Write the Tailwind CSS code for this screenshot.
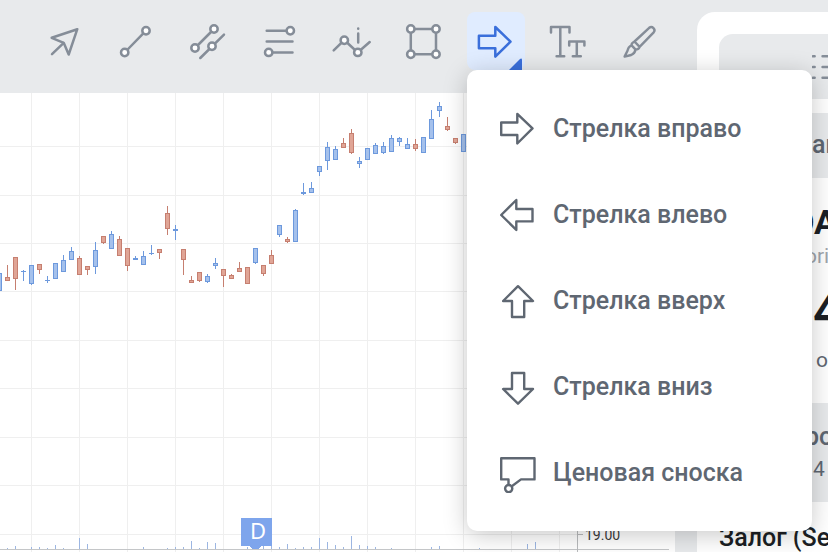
<!DOCTYPE html>
<html lang="ru">
<head>
<meta charset="utf-8">
<meta name="viewport" content="width=device-width, initial-scale=1">
<title>График</title>
<script src="https://cdn.jsdelivr.net/npm/@tailwindcss/browser@4"></script>
</head>
<body class="flex h-screen overflow-hidden bg-[#e8eaec] font-[Roboto,sans-serif] text-[#5f6772]">
<main class="flex min-w-0 flex-1 flex-col">
  <header class="z-10 flex h-[93px] shrink-0 gap-3.5 pt-3 pl-[35px] text-[#858d98]">
    <button type="button" aria-label="Курсор" class="size-[58px] shrink-0">
      <svg viewBox="0 0 58 58" class="size-full" fill="none" stroke="currentColor" stroke-width="2.5" stroke-linecap="round" stroke-linejoin="round"><path d="M42.3 17.2 16.7 25.8 28.7 30.8 33.7 42.5ZM28.7 30.8 17 42.2"/></svg>
    </button>
    <button type="button" aria-label="Линия" class="size-[58px] shrink-0">
      <svg viewBox="0 0 58 58" class="size-full" fill="none" stroke="currentColor" stroke-width="2.5" stroke-linecap="round"><path d="M17.7 40.5 39 18.7"/><g fill="#fff"><circle cx="17.7" cy="40.5" r="3.7"/><circle cx="39" cy="18.7" r="3.7"/></g></svg>
    </button>
    <button type="button" aria-label="Канал" class="size-[58px] shrink-0">
      <svg viewBox="0 0 58 58" class="size-full" fill="none" stroke="currentColor" stroke-width="2.5" stroke-linecap="round"><path d="M16 36 35 17M45 22.7 21.3 46"/><g fill="#fff"><circle cx="16" cy="36" r="3.7"/><circle cx="35" cy="17" r="3.7"/><circle cx="33" cy="34.3" r="3.7"/></g></svg>
    </button>
    <button type="button" aria-label="Уровни" class="size-[58px] shrink-0">
      <svg viewBox="0 0 58 58" class="size-full" fill="none" stroke="currentColor" stroke-width="2.5" stroke-linecap="round"><path d="M15.7 18.8H39M15.7 29.6H41.5M17.7 40.4H41.5"/><g fill="#fff"><circle cx="39.3" cy="18.8" r="3.7"/><circle cx="17.7" cy="40.4" r="3.7"/></g></svg>
    </button>
    <button type="button" aria-label="Волны" class="size-[58px] shrink-0">
      <svg viewBox="0 0 58 58" class="size-full" fill="none" stroke="currentColor" stroke-width="2.5" stroke-linecap="round"><path d="M10.7 38.3 21.3 28 34.7 40.5 46.7 30M35.2 21.6V30.4M35.2 16.6V16.7"/><g fill="#fff"><circle cx="21.3" cy="28.2" r="3.7"/><circle cx="34.8" cy="40.4" r="3.7"/></g></svg>
    </button>
    <button type="button" aria-label="Фигура" class="size-[58px] shrink-0">
      <svg viewBox="0 0 58 58" class="size-full" fill="none" stroke="currentColor" stroke-width="2.5"><path d="M15.8 17H41V42.2H15.8Z"/><g fill="#fff"><circle cx="15.8" cy="17" r="3.7"/><circle cx="41" cy="17" r="3.7"/><circle cx="15.8" cy="42.2" r="3.7"/><circle cx="41" cy="42.2" r="3.7"/></g></svg>
    </button>
    <div class="relative size-[58px] shrink-0">
      <button type="button" aria-label="Стрелки" aria-expanded="true" class="block size-full rounded-lg bg-[#e0ecff] text-[#3a6fdb]">
        <svg viewBox="0 0 58 58" class="size-full" fill="none" stroke="currentColor" stroke-width="2.5" stroke-linejoin="round"><path d="M11.9 23.8H28.3V15L43.5 29.7 28.3 44.6V36.3H11.9Z"/><path d="M55 58V47.5Q54.7 46 53 47L42 58Z" fill="currentColor" stroke="none"/></svg>
      </button>
      <ul class="absolute top-full left-0 w-[345px] rounded-[10px] bg-white pt-4 pb-[15px] text-[25px] font-medium whitespace-nowrap text-[#5f6772] shadow-[0_4px_24px_rgba(0,0,0,0.22)]">
        <li><button type="button" class="flex h-[86px] w-full items-center gap-4 pl-[30px]"><svg viewBox="0 0 40 40" class="size-10" fill="none" stroke="currentColor" stroke-width="2.4" stroke-linejoin="round"><path d="M4.2 13.5H20.3V4.9L35.5 19.4 20.3 34.5V26H4.2Z"/></svg>Стрелка вправо</button></li>
        <li><button type="button" class="flex h-[86px] w-full items-center gap-4 pl-[30px]"><svg viewBox="0 0 40 40" class="size-10" fill="none" stroke="currentColor" stroke-width="2.4" stroke-linejoin="round"><path d="M35.5 14H19.3V5L4.2 20 19.3 34.9V26.4H35.5Z"/></svg>Стрелка влево</button></li>
        <li><button type="button" class="flex h-[86px] w-full items-center gap-4 pl-[30px]"><svg viewBox="0 0 40 40" class="size-10" fill="none" stroke="currentColor" stroke-width="2.4" stroke-linejoin="round"><path d="M21 5.2 36 20H27.2V36H15V20H6.1Z"/></svg>Стрелка вверх</button></li>
        <li><button type="button" class="flex h-[86px] w-full items-center gap-4 pl-[30px]"><svg viewBox="0 0 40 40" class="size-10" fill="none" stroke="currentColor" stroke-width="2.4" stroke-linejoin="round"><path d="M15 6H27.2V22H36L21 36.7 6.1 22H15Z"/></svg>Стрелка вниз</button></li>
        <li><button type="button" class="flex h-[86px] w-full items-center gap-4 pl-[30px]"><svg viewBox="0 0 40 40" class="size-10" fill="none" stroke="currentColor" stroke-width="2.4" stroke-linejoin="round"><path d="M11.5 32V26.4H4.2V5.2H37.5V26.4H24L14.8 33.2"/><circle cx="11.7" cy="35.6" r="3.6"/></svg>Ценовая сноска</button></li>
      </ul>
    </div>
    <button type="button" aria-label="Текст" class="size-[58px] shrink-0">
      <svg viewBox="0 0 58 58" class="size-full" fill="none" stroke="currentColor" stroke-width="2.5" stroke-linecap="round" stroke-linejoin="round"><path d="M12 20.5V15H30.5V20.5M21.3 15V44.2M17.6 44.2H25.2M30.2 33.4V29.5H45.4V33.4M37.8 29.5V44.2M33.8 44.2H41.8"/></svg>
    </button>
    <button type="button" aria-label="Кисть" class="size-[58px] shrink-0">
      <svg viewBox="0 0 58 58" class="size-full" fill="none" stroke="currentColor" stroke-width="2.4" stroke-linecap="round" stroke-linejoin="round"><path d="M23.5 29.5 38.2 15.8A3.2 3.2 0 0 1 42.7 20.3L28.6 34.9M23.5 29.5 28.6 34.9M23.5 29.5Q20.6 31 20.4 33.2L24.6 37.6Q27.4 37.4 28.6 34.9M20.4 33.2Q17.2 35 16.6 38.4L13.6 44.6 20.2 43Q23.8 41.6 24.6 37.6"/></svg>
    </button>
  </header>
  <section class="min-h-0 flex-1 overflow-hidden bg-white" aria-label="График цены">
    <svg id="chart" class="block h-full w-full" preserveAspectRatio="xMinYMin slice" shape-rendering="crispEdges"></svg>
  </section>
</main>
<aside class="mt-3 ml-[22px] w-[131px] shrink-0 overflow-hidden rounded-tl-[18px] bg-white pt-[22px] whitespace-nowrap">
  <div class="ml-[22px] flex h-[65px] items-center rounded-tl-[14px] bg-[#e8eaec] pl-[93px]">
    <button type="button" aria-label="Список" class="shrink-0 text-[#858d98]">
      <svg viewBox="0 0 36 26" class="h-[26px] w-9" fill="none" stroke="currentColor" stroke-width="2.6" stroke-linecap="round"><path d="M1 2.2H2.6M10.6 2.2H34M1 13H2.6M10.6 13H34M1 23.8H2.6M10.6 23.8H34"/></svg>
    </button>
  </div>
  <h2 class="mt-3.5 h-[65px] bg-[#e8eaec] pt-4 pl-[115px] text-[25px] leading-8 font-medium">ап</h2>
  <div class="h-[225px] pt-[22px]">
    <p class="pl-[94px] text-[34px] leading-[44px] font-bold text-[#1c1f24]">ОА</p>
    <p class="pl-[108px] text-[21px] leading-6 text-[#a0a5ac]">ori</p>
    <p class="pt-5 pl-[116px] text-5xl font-bold text-[#1c1f24]">4</p>
    <p class="pt-2 pl-[119px] text-[21px] leading-8">о</p>
  </div>
  <div class="h-[99px] bg-[#e8eaec] pt-[18px]">
    <p class="pl-[108px] text-[25px] leading-8 font-medium">ро</p>
    <p class="pl-[116px] text-[21px] leading-8">4</p>
  </div>
  <p class="mt-5 pl-[22px] text-[25px] leading-8 font-medium text-[#1c1f24]">Залог (Se</p>
</aside>
<script>
  // [up, high, top, bottom, low] for each 8px step; the first one is centred at x = -1
  const candles = [
    [1,273,273,291,291],[0,265,277,281,281],[0,257,257,279,290],[1,270,271,272,281],[1,265,265,284,285],[0,264,264,270,274],
    [1,276,280,281,283],[1,263,263,279,279],[1,255,260,272,272],[1,247,251,260,260],[0,256,258,275,275],[0,266,266,270,275],
    [1,242,250,267,274],[0,236,236,243,244],[1,231,234,249,249],[0,236,239,256,256],[0,248,248,266,271],[1,256,258,260,260],
    [1,251,256,265,265],[1,245,253,254,255],[0,249,249,253,259],[0,206,213,229,235],[1,225,229,231,240],[0,249,249,260,275],
    [0,276,280,283,283],[0,272,272,281,282],[1,274,276,282,283],[1,258,263,266,269],[0,269,269,276,287],[0,274,275,279,279],
    [0,262,268,272,272],[0,267,267,284,284],[1,248,248,263,264],[0,265,265,274,276],[0,250,255,264,264],[1,225,225,235,237],
    [0,237,239,242,243],[1,209,210,242,242],[1,183,192,194,195],[1,182,188,193,193],[1,166,166,172,176],[1,142,147,161,170],
    [1,146,149,160,160],[0,138,143,148,148],[0,129,133,153,154],[1,157,161,164,168],[1,148,148,160,160],[1,143,145,154,154],
    [1,142,146,153,154],[1,135,138,152,152],[1,137,138,142,146],[1,138,144,149,149],[0,139,144,149,151],[1,137,137,153,153],
    [1,110,119,139,139],[1,102,106,111,117],[0,117,126,130,131],[0,138,138,143,144],[1,134,134,152,152]
  ];
  const volumes = [
    [7,548],[15,546],[31,547],[39,547],[47,548],[55,545],[63,548],[79,538],[87,544],[143,547],[167,548],[175,547],[183,547],
    [191,541],[199,548],[207,542],[215,543],[247,547],[263,545],[271,545],[279,547],[287,544],[295,548],[303,547],[311,547],
    [319,538],[327,542],[335,545],[343,547],[351,536],[359,545],[367,546],[375,547],[391,548],[431,547],[439,546],[479,548],
    [527,544],[535,542]
  ];
  const rect = (x, y, w, h, fill) => `<rect x="${x}" y="${y}" width="${w}" height="${h}" fill="${fill}"/>`;
  let out = '';
  for (let x = 31; x < 577; x += 48) out += rect(x, 93, 1, 459, '#efefef');
  for (const y of [146, 195, 243, 291, 340, 388, 437, 485, 534]) out += rect(0, y, 577, 1, '#efefef');
  candles.forEach(([up, high, top, bottom, low], i) => {
    const x = -3 + i * 8, line = up ? '#6d99dd' : '#c67f70', fill = up ? '#a5c1ec' : '#e0a596';
    out += rect(x + 2, high, 1, low - high, line) + rect(x, top, 5, bottom - top, line);
    if (bottom - top > 2) out += rect(x + 1, top + 1, 3, bottom - top - 2, fill);
  });
  for (const [x, y] of volumes) out += rect(x, y, 1, 549 - y, '#9cb6e2');
  out += rect(0, 549, 669, 1, '#c4c6c8') + rect(577, 93, 1, 459, '#b9bbbd') + rect(578, 534, 5, 1, '#b9bbbd');
  out += '<path d="M241 518H272V546H262L258 549H253L249 546H241Z" fill="#7ea5ec"/>';
  out += '<text x="258" y="539" text-anchor="middle" font-family="Noto Sans, sans-serif" font-size="22" fill="#fff">D</text>';
  out += '<text x="585" y="540" font-family="Roboto, sans-serif" font-size="14" fill="#3c3c3c">19.00</text>';
  const chart = document.getElementById('chart');
  chart.setAttribute('viewBox', '0 93 675 459');
  chart.innerHTML = out;
</script>
</body>
</html>
